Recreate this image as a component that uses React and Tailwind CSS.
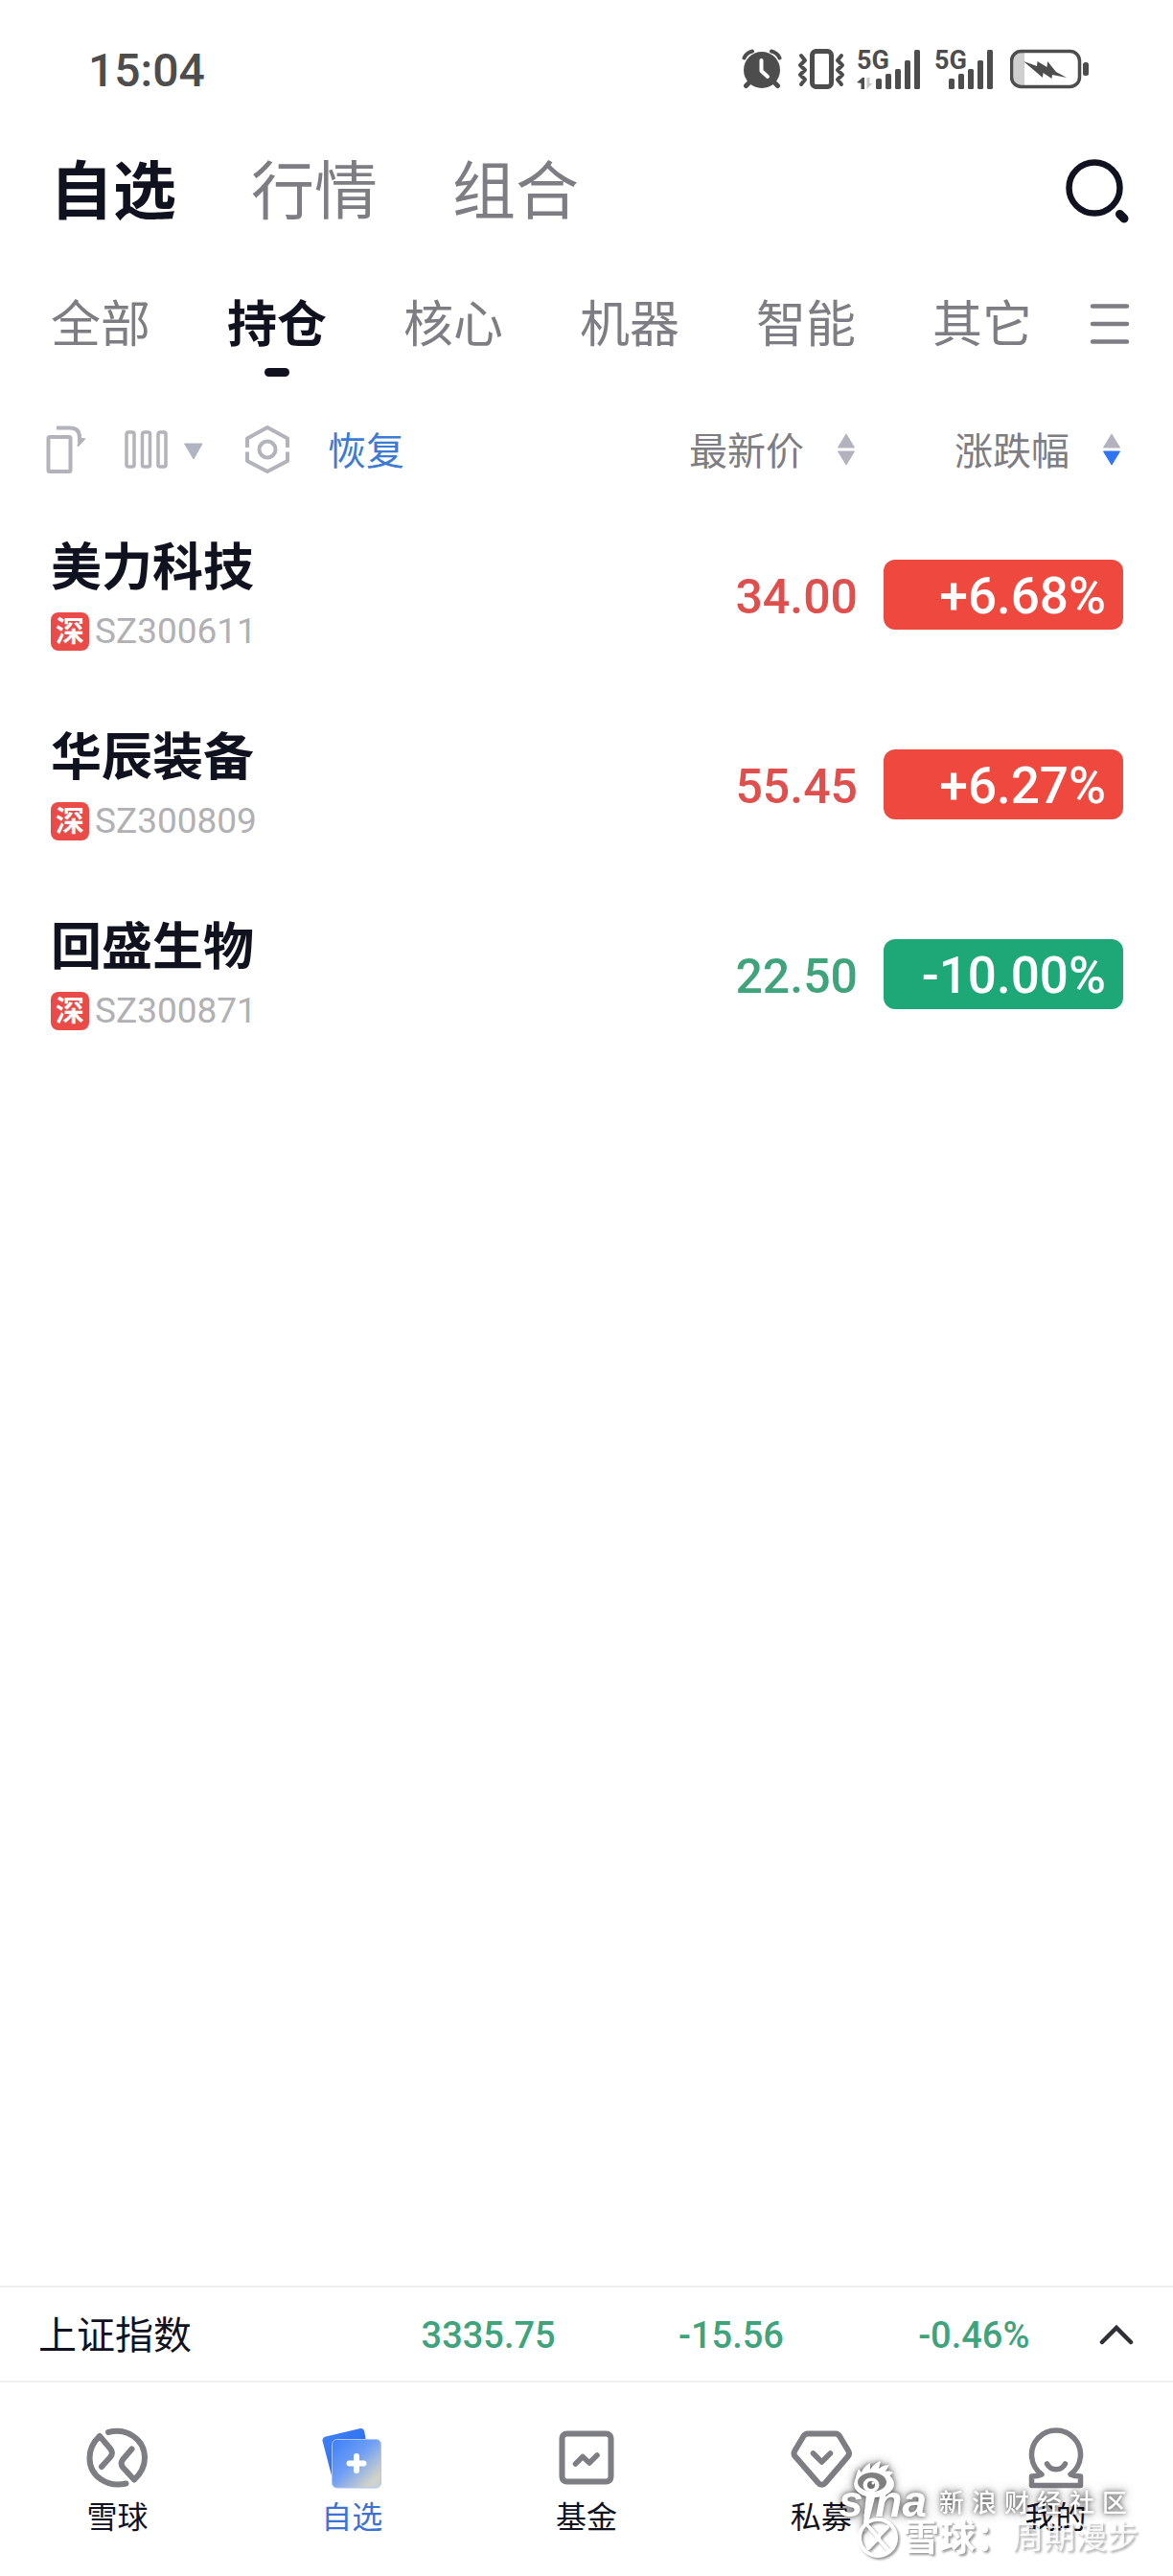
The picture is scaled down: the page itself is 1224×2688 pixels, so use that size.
import React, { useState } from 'react';

const mainTabs = ['自选', '行情', '组合'];
const groupTabs = ['全部', '持仓', '核心', '机器', '智能', '其它'];

const stocks = [
  { name: '美力科技', code: 'SZ300611', price: '34.00', change: '+6.68%', up: true },
  { name: '华辰装备', code: 'SZ300809', price: '55.45', change: '+6.27%', up: true },
  { name: '回盛生物', code: 'SZ300871', price: '22.50', change: '-10.00%', up: false },
];

const AlarmIcon = () => (
  <svg className="w-[42px] h-[42px]" viewBox="0 0 42 42" fill="none" stroke="#4d4d4d" strokeLinecap="round">
    <circle cx="21" cy="22" r="19" fill="#4d4d4d" stroke="none" />
    <path d="M2.500 9.500C4 6 7 3.500 11 2.500M39.500 9.500C38 6 35 3.500 31 2.500" strokeWidth="4" />
    <path d="M8 35L4.500 38.500M34 35l3.500 3.500" strokeWidth="5" />
    <path d="M20.500 12v11l6.500 6" stroke="#fff" strokeWidth="4" strokeLinejoin="round" />
  </svg>
);

const VibrateIcon = () => (
  <svg className="w-[50px] h-[42px]" viewBox="0 0 50 42" fill="none" stroke="#4d4d4d" strokeLinecap="round" strokeLinejoin="round">
    <rect x="15.500" y="2.500" width="20" height="37" rx="4" strokeWidth="5" />
    <path d="M4 7l4 5-5 5 5 5-5 5 5 5-4 5M46 7l-4 5 5 5-5 5 5 5-5 5 4 5" strokeWidth="4" />
  </svg>
);

const SignalIcon = ({ data }) => (
  <svg className="w-[68px] h-[42px] overflow-visible" viewBox="0 0 68 42" fill="#4d4d4d">
    <text x={data ? 0 : 5} y="21" fontFamily="Liberation Sans Narrow, Roboto" fontWeight="700" fontSize="27">5G</text>
    {data && <path d="M0 35l6-5h2v12H4.500v-6z" />}
    {data && <path d="M10.500 30v12l6-6h-3v-6z" fill="#c9c9c9" />}
    <rect x="20" y="31" width="6" height="11" rx="1.500" />
    <rect x="30" y="26" width="6" height="16" rx="1.500" />
    <rect x="40" y="21" width="6" height="21" rx="1.500" />
    <rect x="50" y="12" width="6" height="30" rx="1.500" />
    <rect x="60" y="1" width="6" height="41" rx="1.500" />
  </svg>
);

const BatteryIcon = () => (
  <svg className="w-[84px] h-[42px]" viewBox="0 0 84 42">
    <path d="M10 3h5v36h-5a8 8 0 0 1-8-8V11a8 8 0 0 1 8-8z" fill="#cfcfcf" />
    <rect x="1.500" y="2.500" width="71" height="37" rx="10" fill="none" stroke="#4d4d4d" strokeWidth="3.500" />
    <rect x="76" y="14" width="6" height="14" rx="2.500" fill="#4d4d4d" />
    <path d="M14 13l14 5 .5-5 10 6 .5-6 9 11 11 6-15-3-.5 4-9-6-.5 5z" fill="#4d4d4d" />
  </svg>
);

const SortIcon = ({ desc }) => (
  <svg className="w-5 h-[34px]" viewBox="0 0 20 34">
    <path d="M10 1l8.500 14h-17z" fill="#b3b3bf" stroke="#b3b3bf" strokeLinejoin="round" />
    <path d="M10 33l8.500-14h-17z" fill={desc ? '#2f74f5' : '#b3b3bf'} stroke={desc ? '#2f74f5' : '#b3b3bf'} strokeLinejoin="round" />
  </svg>
);

const RotateIcon = () => (
  <svg className="w-[42px] h-[50px]" viewBox="0 0 42 50" fill="none" stroke="#b3b3bb" strokeWidth="4">
    <rect x="2.500" y="12" width="23" height="36" rx="1.500" />
    <path d="M11 2.500h14c7 0 10 4 10 10v5" />
    <path d="M35.500 14h4.500l-6.500 7z" fill="#b3b3bb" strokeWidth="2" strokeLinejoin="round" />
  </svg>
);

const ColumnsIcon = () => (
  <svg className="w-[82px] h-[40px]" viewBox="0 0 82 40" fill="none" stroke="#b3b3bb" strokeWidth="3.500">
    <rect x="2" y="2" width="8" height="36" rx="2" />
    <rect x="18.500" y="2" width="8" height="36" rx="2" />
    <rect x="35" y="2" width="8" height="36" rx="2" />
    <path d="M62.500 14h18.500L72 30z" fill="#b0b3c2" stroke="#b0b3c2" strokeWidth="1" strokeLinejoin="round" />
  </svg>
);

const HexIcon = () => (
  <svg className="w-[46px] h-[50px]" viewBox="0 0 46 50" fill="none" stroke="#b3b3bb" strokeWidth="4" strokeLinejoin="round">
    <path d="M2 23v-9.500L23 2l21 11.500V23M2 27.500V37l21 11 21-11v-9.500" />
    <circle cx="23" cy="25" r="8.500" />
  </svg>
);

const BallIcon = () => (
  <svg className="size-16" viewBox="0 0 64 64" fill="none" stroke="#7d7d84" strokeWidth="6" strokeLinecap="round" strokeLinejoin="round">
    <path d="M23 5C42 0 61 12 61 32c0 8.500-4.500 16.500-11 22.500L38.500 42c-2.500-3-2.500-6 0-9L47.500 22.500" />
    <path d="M41.500 58.500C22 63 3.500 51 3.500 32c0-9 4-17 10.500-23L25 22c2.500 3 2.500 6 0 9l-9 10" />
  </svg>
);

const WatchIcon = () => (
  <svg className="size-16" viewBox="0 0 64 64">
    <defs>
      <linearGradient id="cardBack" x1="0" y1="0" x2="1" y2="1">
        <stop offset="0" stopColor="#4283f5" />
        <stop offset="1" stopColor="#1f62ee" />
      </linearGradient>
      <linearGradient id="cardFront" x1="0" y1="0" x2="1" y2="1">
        <stop offset="0" stopColor="#3c7ff8" />
        <stop offset="0.450" stopColor="#6f9ff4" />
        <stop offset="0.850" stopColor="#d2d3c8" />
        <stop offset="1" stopColor="#c2cfe4" />
      </linearGradient>
    </defs>
    <path d="M5 9.500L40 1.200a4.500 4.500 0 0 1 5.300 3.300L53 50l-41 4L1.500 14A4 4 0 0 1 5 9.500z" fill="url(#cardBack)" />
    <rect x="11.500" y="12.500" width="51" height="50.500" rx="5" fill="url(#cardFront)" stroke="#a9c5fa" />
    <path d="M37 30v15M29.500 37.500h15" stroke="#fff" strokeWidth="6" strokeLinecap="round" />
  </svg>
);

const FundIcon = () => (
  <svg className="size-16" viewBox="0 0 64 64" fill="none" stroke="#7d7d84" strokeWidth="6" strokeLinecap="round" strokeLinejoin="round">
    <rect x="6.500" y="6.500" width="51" height="50" rx="5" />
    <path d="M20.500 38l7.500-7.500 7 6.500 8-8" strokeWidth="5.500" />
  </svg>
);

const GemIcon = () => (
  <svg className="size-16" viewBox="0 0 64 64" fill="none" stroke="#7d7d84" strokeWidth="6" strokeLinecap="round" strokeLinejoin="round">
    <path d="M18 6.500h29c2 0 3 1 4 2.500l9 15c1.500 2.500 1.500 4 0 6L36.500 57.500c-2.500 3-5.500 3-8 0L4.500 30c-1.500-2-1.500-3.500 0-6l9-15c1-1.500 2.500-2.500 4.500-2.500z" />
    <path d="M23.500 27l9 9 9-9" strokeWidth="5.500" />
  </svg>
);

const MeIcon = () => (
  <svg className="size-16" viewBox="0 0 64 64" fill="none" stroke="#7d7d84" strokeWidth="5.500" strokeLinecap="round">
    <path d="M17 49A25.500 25.500 0 1 1 47 49c3 1.500 6 2 10.500 2v9.500h-51V51c4.500 0 7.500-.5 10.500-2z" strokeLinejoin="round" />
    <path d="M22.500 38c4 7.500 15 7.500 19 0" />
  </svg>
);

const navItems = [
  { label: '雪球', Icon: BallIcon },
  { label: '自选', Icon: WatchIcon, active: true },
  { label: '基金', Icon: FundIcon },
  { label: '私募', Icon: GemIcon },
  { label: '我的', Icon: MeIcon },
];

const Watermark = () => (
  <div className="pointer-events-none absolute top-20 right-9 text-white">
    <div className="flex items-center gap-2 [filter:drop-shadow(0_0_2px_rgba(0,0,0,0.45))_drop-shadow(0_0_5px_rgba(0,0,0,0.5))]">
      <svg className="w-[98px] h-[76px]" viewBox="0 0 98 76" fill="#fff">
        <text x="1" y="60" fontFamily="Liberation Sans" fontWeight="700" fontStyle="italic" fontSize="46">sina</text>
        <path d="M30 36h10L30 75l-4 2z" />
        <path d="M19 29C17 20 21 13 22 10l3 4c1-4 5-8 9-10v7c2-4 7-8 11-9l-2 8c3-3 7-4 11-4l-4 7c3-1 6 0 8 1l-4 4c3 3 5 8 3 12z" />
        <ellipse cx="38" cy="26" rx="21" ry="14" />
        <ellipse cx="36" cy="24" rx="15" ry="10" fill="#808080" />
        <ellipse cx="35" cy="27" rx="8.500" ry="7.500" />
        <circle cx="35" cy="27" r="4" fill="#6f6f6f" />
        <circle cx="37" cy="25" r="1.500" />
      </svg>
      <span className="flex gap-2 pt-4 text-[26px] leading-8 font-medium">
        {[...'新浪财经社区'].map((ch) => (
          <span key={ch}>{ch}</span>
        ))}
      </span>
    </div>
    <div className="-mt-4 ml-5 flex items-center leading-10 [filter:drop-shadow(2px_2px_1px_rgba(0,0,0,0.4))]">
      <svg className="size-11 mr-1" viewBox="0 0 44 44" fill="none" stroke="#fff" strokeWidth="4" strokeLinecap="round">
        <circle cx="22" cy="22" r="19" />
        <path d="M12 10l8 9c1.500 2 1.500 4 0 6l-8 8M32 34l-8-9c-1.500-2-1.500-4 0-6l8-8" />
      </svg>
      <span className="text-[38px] font-bold">雪球：</span>
      <span className="text-[33px] opacity-80">周期漫步</span>
    </div>
  </div>
);

const App = () => {
  const [mainTab, setMainTab] = useState('自选');
  const [group, setGroup] = useState('持仓');

  return (
    <div lang="zh-CN" className="min-h-screen flex flex-col bg-white text-[#11121f] font-['Roboto','Noto_Sans_CJK_SC',sans-serif]">
      {/* Status bar */}
      <div className="flex items-center justify-between h-36 pl-[92px] pr-[86px]">
        <span className="pt-1 text-5xl font-medium text-[#4d4d4d]">15:04</span>
        <div className="flex items-center">
          <span className="mr-4"><AlarmIcon /></span>
          <span className="mr-3"><VibrateIcon /></span>
          <span className="mr-2"><SignalIcon data /></span>
          <span className="mr-4"><SignalIcon /></span>
          <BatteryIcon />
        </div>
      </div>

      {/* Main tabs */}
      <header className="flex items-center justify-between h-27 pl-[52px] pr-11">
        <div className="flex gap-[78px] pt-1.5">
          {mainTabs.map((tab) => (
            <button
              key={tab}
              onClick={() => setMainTab(tab)}
              className={tab === mainTab ? 'text-[66px] leading-20 font-bold' : 'text-[66px] leading-20 text-[#7d7d83]'}
            >
              {tab}
            </button>
          ))}
        </div>
        <button aria-label="搜索">
          <svg className="size-[72px]" viewBox="0 0 72 72" fill="none" stroke="#11121f">
            <circle cx="34" cy="34" r="26.500" strokeWidth="6.500" />
            <path d="M60.500 61.500l4.500 4.500" strokeWidth="9" strokeLinecap="round" />
          </svg>
        </button>
      </header>

      {/* Group tabs */}
      <div className="flex items-start justify-between pt-14 pl-[53px] pr-[45px] h-37">
        <div className="flex gap-20">
          {groupTabs.map((tab) => (
            <button key={tab} onClick={() => setGroup(tab)} className="flex flex-col items-center gap-3">
              <span className={tab === group ? 'text-[52px] leading-16 font-bold' : 'text-[52px] leading-16 text-[#7d7d83]'}>
                {tab}
              </span>
              {tab === group && <span className="w-[26px] h-[9px] rounded-full bg-[#11121f]" />}
            </button>
          ))}
        </div>
        <button aria-label="分组" className="flex h-15 items-center">
          <svg className="w-[42px] h-[42px]" viewBox="0 0 42 42" stroke="#7d7d83" strokeWidth="4.500" strokeLinecap="round">
            <path d="M3 2.500h36M3 21h36M3 39.500h36" />
          </svg>
        </button>
      </div>

      {/* Stock list */}
      <main className="flex-1">
        <table className="w-full">
          <thead>
            <tr className="h-[121px] text-[40px] text-[#7d7d83]">
              <th className="pl-12 pt-4 font-normal">
                <div className="flex items-center">
                  <button aria-label="横屏"><RotateIcon /></button>
                  <button aria-label="列设置" className="ml-10"><ColumnsIcon /></button>
                  <button aria-label="设置" className="ml-11"><HexIcon /></button>
                  <button className="ml-10 pt-1.5 text-[#3c7bd4]">恢复</button>
                </div>
              </th>
              <th className="pt-4 pr-0.5 font-normal">
                <button className="flex items-center gap-[34px] ml-auto">
                  <span className="pt-1.5">最新价</span>
                  <SortIcon />
                </button>
              </th>
              <th className="pt-4 pr-[54px] font-normal">
                <button className="flex items-center gap-[34px] ml-auto">
                  <span className="pt-1.5">涨跌幅</span>
                  <SortIcon desc />
                </button>
              </th>
            </tr>
          </thead>
          <tbody>
            {stocks.map((stock) => (
              <tr key={stock.code} className="h-[198px]">
                <td className="pl-[53px]">
                  <div className="text-[53px] leading-16 font-bold">{stock.name}</div>
                  <div className="mt-[14px] flex items-center gap-1.5">
                    <span className="flex items-center justify-center size-10 rounded-lg bg-[#ea4a48] text-white text-3xl font-bold">深</span>
                    <span className="text-[37px] leading-10 text-[#b0b0b5]">{stock.code}</span>
                  </div>
                </td>
                <td className={stock.up ? 'pt-1.5 text-right text-[50px] font-medium text-[#df4f4e]' : 'pt-1.5 text-right text-[50px] font-medium text-[#3fa37c]'}>
                  {stock.price}
                </td>
                <td className="w-[329px] pr-[52px]">
                  <div
                    className={
                      stock.up
                        ? 'ml-auto w-[250px] pt-[3px] pr-[18px] rounded-xl bg-[#ef483f] text-white text-right text-[53px] leading-[70px] font-medium'
                        : 'ml-auto w-[250px] pt-[3px] pr-[18px] rounded-xl bg-[#1ea877] text-white text-right text-[53px] leading-[70px] font-medium'
                    }
                  >
                    {stock.change}
                  </div>
                </td>
              </tr>
            ))}
          </tbody>
        </table>
      </main>

      {/* Index bar */}
      <div className="flex items-center h-[99px] border-t-2 border-[#eeeeef] text-[38px] font-medium text-[#3fa37c]">
        <span className="w-[383px] pt-1 pl-10 text-[40px] font-normal text-[#11121f]">上证指数</span>
        <span className="flex-1 pt-1 text-center">3335.75</span>
        <span className="flex-1 pt-1 text-center">-15.56</span>
        <span className="flex-1 pt-1 text-center">-0.46%</span>
        <button aria-label="展开" className="w-[81px] pl-1">
          <svg className="w-9 h-[22px]" viewBox="0 0 36 22" fill="none" stroke="#2f2f36" strokeWidth="4.500" strokeLinecap="round">
            <path d="M3 19L18 4l15 15" />
          </svg>
        </button>
      </div>

      {/* Bottom navigation */}
      <nav className="relative flex h-51 border-t-2 border-[#f1f1f3]">
        {navItems.map(({ label, Icon, active }) => (
          <a key={label} href="#" className="flex-1 flex flex-col items-center gap-[10px] pt-[47px]">
            <Icon />
            <span className={active ? 'text-[32px] leading-10 text-[#3c72d4]' : 'text-[32px] leading-10'}>{label}</span>
          </a>
        ))}
        <Watermark />
      </nav>
    </div>
  );
};

export default App;
